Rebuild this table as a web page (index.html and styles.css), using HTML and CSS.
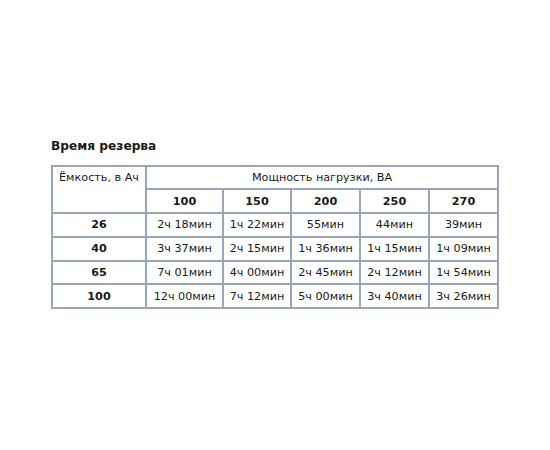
FILE: index.html
```html
<!DOCTYPE html>
<html>
<head>
<meta charset="utf-8">
<link rel="stylesheet" href="styles.css">
</head>
<body>
<div class="wrap">
  <h3 class="title">Время резерва</h3>
  <table class="grid">
    <colgroup>
      <col class="c0"><col class="c1"><col class="c2"><col class="c3"><col class="c4"><col class="c5">
    </colgroup>
    <tr class="h1">
      <td rowspan="2" class="cap">Ёмкость, в Ач</td>
      <td colspan="5">Мощность нагрузки, ВА</td>
    </tr>
    <tr class="h2">
      <td class="b">100</td><td class="b">150</td><td class="b">200</td><td class="b">250</td><td class="b">270</td>
    </tr>
    <tr class="r">
      <td class="b">26</td><td>2ч 18мин</td><td>1ч 22мин</td><td>55мин</td><td>44мин</td><td>39мин</td>
    </tr>
    <tr class="r">
      <td class="b">40</td><td>3ч 37мин</td><td>2ч 15мин</td><td>1ч 36мин</td><td>1ч 15мин</td><td>1ч 09мин</td>
    </tr>
    <tr class="r">
      <td class="b">65</td><td>7ч 01мин</td><td>4ч 00мин</td><td>2ч 45мин</td><td>2ч 12мин</td><td>1ч 54мин</td>
    </tr>
    <tr class="r">
      <td class="b">100</td><td>12ч 00мин</td><td>7ч 12мин</td><td>5ч 00мин</td><td>3ч 40мин</td><td>3ч 26мин</td>
    </tr>
  </table>
</div>
</body>
</html>
```
FILE: styles.css
```css
html, body {
  margin: 0;
  padding: 0;
  background: #ffffff;
}
body {
  font-family: "DejaVu Sans", Verdana, sans-serif;
  color: #1a1a1a;
}
.wrap {
  padding: 138px 0 0 51px;
}
.title {
  margin: 0 0 11px 0;
  font-size: 12.2px;
  font-weight: bold;
  line-height: 16px;
}
.grid {
  border-collapse: collapse;
  table-layout: fixed;
  width: 446px;
  font-size: 11.2px;
}
.c0 { width: 94px; }
.c1 { width: 77px; }
.c2 { width: 68px; }
.c3 { width: 69px; }
.c4 { width: 69px; }
.c5 { width: 69px; }
.grid td {
  border: 2px solid #95a7b9;
  text-align: center;
  padding: 0;
  white-space: nowrap;
}
.h1 td { height: 21px; }
.cap { vertical-align: top; padding-top: 4px !important; }
.h2 td { height: 22px; }
.r td { height: 21.8px; }
.b { font-weight: bold; font-size: 11.2px; }
```
